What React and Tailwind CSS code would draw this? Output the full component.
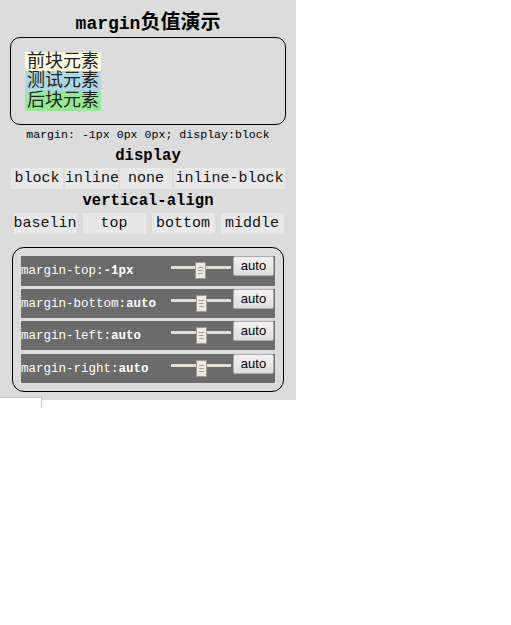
import React from "react";

const mono = { fontFamily: '"Liberation Mono", "DejaVu Sans Mono", monospace' };
const cjk = { fontFamily: '"Liberation Mono", "Noto Sans CJK SC", monospace' };

function Slider({ pos }) {
  return (
    <div className="relative w-[60px] h-[3px] bg-[#e3dfd7] mt-[10px]">
      <div
        className="absolute top-[-4px] w-[11px] h-[17px] bg-[#ece9e2] border border-[#9f9a90] flex flex-col items-center justify-center gap-[2px]"
        style={{ left: pos }}
      >
        <div className="w-[5px] h-px bg-[#a8a39a]" />
        <div className="w-[5px] h-px bg-[#a8a39a]" />
        <div className="w-[5px] h-px bg-[#a8a39a]" />
      </div>
    </div>
  );
}

function Row({ name, value, h, pos, mb }) {
  return (
    <div className={`flex items-start bg-[#6b6b6b] ${h} ${mb}`}>
      <div className="pt-[8px] text-white text-[12.5px] leading-[15px] whitespace-nowrap" style={mono}>
        {name}:<span className="font-bold">{value}</span>
      </div>
      <div className="ml-auto mr-[2px]">
        <Slider pos={pos} />
      </div>
      <button
        className="mr-[1px] w-[41px] h-[20px] border border-[#acacac] rounded-[2px] bg-gradient-to-b from-[#f3f3f3] to-[#dddddd] text-[13px] leading-[18px] text-black"
        style={{ fontFamily: '"Liberation Sans", Arial, sans-serif' }}
      >
        auto
      </button>
    </div>
  );
}

export default function App() {
  const btn = "h-[21px] bg-[#e8e8e8] text-[15px] leading-[21px] text-[#111] text-center whitespace-nowrap overflow-hidden";
  return (
    <div className="w-[511px] h-[625px] bg-white">
      <div className="w-[296px] h-[400px] bg-[#dcdcdc] pt-[10px]">
        <div className="text-center leading-[22px] font-bold text-black">
          <span className="text-[18px]" style={mono}>margin</span>
          <span className="text-[20px]" style={{ fontFamily: '"Noto Sans CJK SC", sans-serif' }}>负值演示</span>
        </div>
        <div className="mx-[10px] mt-[2px] h-[88px] border border-black rounded-[10px] pt-[14px] pl-[14px]">
          <div className="w-[76px] h-[20px] bg-[#ffffe0] text-[18px] leading-[20px] text-center text-[#222]" style={cjk}>前块元素</div>
          <div className="w-[76px] h-[20px] mt-[-1px] bg-[#add8e6] text-[18px] leading-[20px] text-center text-[#222]" style={cjk}>测试元素</div>
          <div className="w-[76px] h-[20px] bg-[#90ee90] text-[18px] leading-[20px] text-center text-[#222]" style={cjk}>后块元素</div>
        </div>
        <div className="text-center text-[11.6px] leading-[18px] mt-[1px] text-black" style={mono}>
          margin: -1px 0px 0px; display:block
        </div>
        <div className="text-center text-[15.6px] leading-[18px] mt-[3px] font-bold text-black" style={mono}>display</div>
        <div className="flex justify-center gap-[2px] mt-[3px]" style={mono}>
          <div className={`${btn} w-[52px]`}>block</div>
          <div className={`${btn} w-[53px]`}>inline</div>
          <div className={`${btn} w-[52px]`}>none</div>
          <div className={`${btn} w-[111px]`}>inline-block</div>
        </div>
        <div className="text-center text-[15.6px] leading-[18px] mt-[3px] font-bold text-black" style={mono}>vertical-align</div>
        <div className="flex justify-center gap-[6px] mt-[3px] ml-[1px]" style={mono}>
          <div className={`${btn} w-[63px] text-left`}>baseline</div>
          <div className={`${btn} w-[63px]`}>top</div>
          <div className={`${btn} w-[63px]`}>bottom</div>
          <div className={`${btn} w-[63px]`}>middle</div>
        </div>
        <div className="mx-[12px] mt-[13px] h-[145px] border border-black rounded-[12px] pt-[8px] px-[8px]">
          <Row name="margin-top" value="-1px" h="h-[30px]" pos={24} mb="mb-[3px]" />
          <Row name="margin-bottom" value="auto" h="h-[29px]" pos={25} mb="mb-[3px]" />
          <Row name="margin-left" value="auto" h="h-[29px]" pos={25} mb="mb-[4px]" />
          <Row name="margin-right" value="auto" h="h-[29px]" pos={25} mb="" />
        </div>
      </div>
      <div className="w-[42px] h-[10px] mt-[-3px] border-t border-r border-[#c8c8c8] bg-white" />
    </div>
  );
}
